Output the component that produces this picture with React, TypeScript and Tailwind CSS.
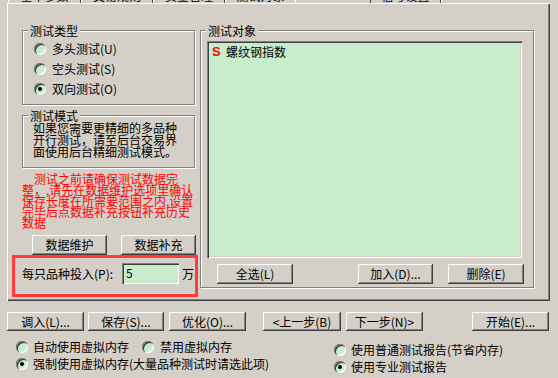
import React from 'react';

const Btn = ({
  children,
  className = '',
}: {
  children: React.ReactNode;
  className?: string;
}) => (
  <div
    className={`flex shrink-0 items-center justify-center bg-[#d4d0c8] text-[12px] leading-[12px] whitespace-nowrap shadow-[inset_-1px_-1px_0_#404040,inset_1px_1px_0_#fff,inset_-2px_-2px_0_#808080] ${className}`}
  >
    {children}
  </div>
);

const Radio = ({ checked = false }: { checked?: boolean }) => (
  <div className="flex h-[12px] w-[12px] shrink-0 items-center justify-center rounded-full bg-[#c7edcc] shadow-[inset_1px_1px_0_#808080,inset_2px_2px_0_#404040,inset_-1px_-1px_0_#fff]">
    {checked && <div className="h-[4px] w-[4px] rounded-full bg-black" />}
  </div>
);

const Group = ({
  title,
  className = '',
  children,
}: {
  title: string;
  className?: string;
  children: React.ReactNode;
}) => (
  <div
    className={`relative border border-[#808080] shadow-[inset_1px_1px_0_#fff,1px_1px_0_#fff] ${className}`}
  >
    <span className="absolute -top-[7px] left-[5px] bg-[#d4d0c8] px-[2px] text-[12px] leading-[14px] whitespace-nowrap">
      {title}
    </span>
    {children}
  </div>
);

const Tab = ({ label, className = '' }: { label: string; className?: string }) => (
  <div className={`h-[3px] shrink-0 overflow-hidden ${className}`}>
    <div className="-mt-[11px] text-center text-[12px] leading-[14px] whitespace-nowrap">
      {label}
    </div>
  </div>
);

export default function App() {
  return (
    <div className="h-[378px] w-[558px] overflow-hidden bg-[#d4d0c8] font-['Noto_Sans_CJK_SC',sans-serif] text-[12px] text-black">
      {/* tab strip, mostly cut off */}
      <div className="flex h-[3px]">
        <Tab label="基本参数" className="ml-[8px] w-[73px] border-r border-l border-r-[#404040] border-l-white" />
        <Tab label="交易规则" className="w-[72px] border-r border-l border-r-[#404040] border-l-white" />
        <Tab label="资金管理" className="w-[72px] border-r border-l border-r-[#404040] border-l-white" />
        <Tab label="测试对象" className="w-[71px] border-r border-l border-r-white border-l-white" />
        <div className="w-[74px] shrink-0" />
        <Tab label="信号设置" className="w-[71px] border-r border-l border-r-[#404040] border-l-[#404040]" />
        <div className="h-[3px] w-[108px] shrink-0 border-l border-l-white" />
      </div>

      {/* tab page */}
      <div className="ml-[7px] flex h-[298px] w-[543px] pt-[27px] pl-[15px] shadow-[inset_1px_1px_0_#fff,inset_-1px_-1px_0_#404040,inset_-2px_-2px_0_#808080]">
        {/* left column */}
        <div className="flex w-[173px] shrink-0 flex-col">
          <Group title="测试类型" className="pt-[8px] pb-[5px] pl-[11px]">
            {[
              ['多头测试(U)', false],
              ['空头测试(S)', false],
              ['双向测试(O)', true],
            ].map(([t, c]) => (
              <div key={t as string} className="flex h-[20px] items-center">
                <Radio checked={c as boolean} />
                <span className="ml-[6px] leading-[14px] whitespace-nowrap">{t}</span>
              </div>
            ))}
          </Group>

          <Group title="测试模式" className="mt-[10px] pt-[6px] pb-[9px] pl-[10px]">
            <div className="leading-[12px] whitespace-nowrap">
              如果您需要更精细的多品种
              <br />
              开行测试，请至后台交易界
              <br />
              面使用后台精细测试模式。
            </div>
          </Group>

          <div className="mt-[5px] text-[12px] leading-[11px] whitespace-nowrap text-[#ff0000]">
            <div className="pl-[12px]">测试之前请确保测试数据完</div>
            <div>整，,请先在数据维护选项里确认</div>
            <div>保存长度在所需要范围之内,设置</div>
            <div>完毕后点数据补充按钮补充历史</div>
            <div>数据</div>
          </div>

          <div className="mt-[7px] flex">
            <Btn className="ml-[10px] h-[20px] w-[75px]">数据维护</Btn>
            <Btn className="ml-[14px] h-[20px] w-[75px]">数据补充</Btn>
          </div>

          <div className="-ml-[10px] flex h-[42px] w-[186px] items-center border-[3px] border-[#ff3b3b] pb-[5px] pl-[7px]">
            <span className="leading-[14px] whitespace-nowrap">每只品种投入(P):</span>
            <div className="ml-auto flex h-[21px] w-[57px] shrink-0 items-start bg-[#c7edcc] pt-[3px] pl-[4px] leading-[14px] shadow-[inset_1px_1px_0_#808080,inset_2px_2px_0_#404040,inset_-1px_-1px_0_#fff]">
              5
            </div>
            <span className="mr-[1px] ml-[3px] leading-[14px]">万</span>
          </div>
        </div>

        {/* right group */}
        <Group title="测试对象" className="ml-[5px] h-[258px] w-[334px] shrink-0 pt-[10px] pl-[6px]">
          <div className="h-[217px] w-[315px] bg-[#c7edcc] pt-[4px] pl-[5px] shadow-[inset_1px_1px_0_#808080,inset_2px_2px_0_#404040,inset_-1px_-1px_0_#fff,inset_-2px_-2px_0_#d4d0c8]">
            <div className="flex items-center leading-[14px]">
              <span className="w-[14px] font-['Liberation_Sans',sans-serif] text-[13px] font-bold text-[#ff0000]">
                S
              </span>
              <span className="whitespace-nowrap">螺纹钢指数</span>
            </div>
          </div>
          <div className="mt-[6px] flex">
            <Btn className="ml-[10px] h-[20px] w-[76px]">全选(L)</Btn>
            <Btn className="ml-[65px] h-[20px] w-[75px]">加入(D)...</Btn>
            <Btn className="ml-[15px] h-[20px] w-[76px]">删除(E)</Btn>
          </div>
        </Group>
      </div>

      {/* bottom buttons */}
      <div className="mt-[11px] flex">
        <Btn className="ml-[7px] h-[19px] w-[77px]">调入(L)...</Btn>
        <Btn className="ml-[4px] h-[19px] w-[76px]">保存(S)...</Btn>
        <Btn className="ml-[5px] h-[19px] w-[77px]">优化(O)...</Btn>
        <Btn className="ml-[17px] h-[19px] w-[78px]">&lt;上一步(B)</Btn>
        <Btn className="ml-[5px] h-[19px] w-[77px]">下一步(N)&gt;</Btn>
        <Btn className="ml-[49px] h-[19px] w-[77px]">开始(E)...</Btn>
      </div>

      {/* bottom options */}
      <div className="mt-[7px] flex">
        <div className="w-[334px] shrink-0 pl-[16px]">
          <div className="flex h-[17px] items-center">
            <Radio />
            <span className="ml-[5px] leading-[14px] whitespace-nowrap">自动使用虚拟内存</span>
            <div className="ml-[13px]">
              <Radio />
            </div>
            <span className="ml-[6px] leading-[14px] whitespace-nowrap">禁用虚拟内存</span>
          </div>
          <div className="flex h-[17px] items-center">
            <Radio checked />
            <span className="ml-[5px] leading-[14px] whitespace-nowrap">
              强制使用虚拟内存(大量品种测试时请选此项)
            </span>
          </div>
        </div>
        <div className="mt-[3px]">
          <div className="flex h-[17px] items-center">
            <Radio />
            <span className="ml-[5px] leading-[14px] whitespace-nowrap">使用普通测试报告(节省内存)</span>
          </div>
          <div className="flex h-[17px] items-center">
            <Radio checked />
            <span className="ml-[5px] leading-[14px] whitespace-nowrap">使用专业测试报告</span>
          </div>
        </div>
      </div>
    </div>
  );
}
